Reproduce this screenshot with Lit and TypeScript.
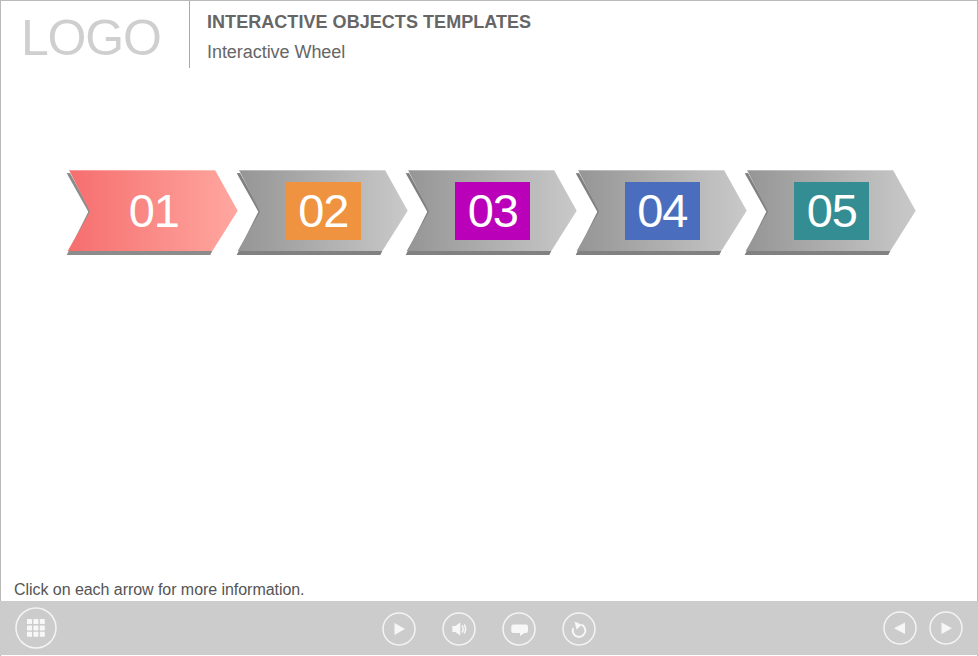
import { LitElement, html, css, svg } from "lit";
import { customElement } from "lit/decorators.js";

const ITEMS = [
  { n: "01", box: "", active: true },
  { n: "02", box: "#ef9340" },
  { n: "03", box: "#bb00b9" },
  { n: "04", box: "#4a6ebd" },
  { n: "05", box: "#338d92" },
];

const grid = [0, 1, 2].flatMap((y) =>
  [0, 1, 2].map((x) => svg`<rect x=${12 + x * 6.4} y=${12 + y * 6.4} width="5" height="5" rx=".6" fill="#f7f7f7"/>`)
);

@customElement("app-root")
export class AppRoot extends LitElement {
  static styles = css`
    :host {
      display: block;
      width: 978px;
      height: 656px;
      font-family: "Liberation Sans", Arial, sans-serif;
      background: #fff;
    }
    .page {
      box-sizing: border-box;
      width: 978px;
      height: 656px;
      border: 1px solid #b9b9b9;
      border-bottom: 0;
      display: flex;
      flex-direction: column;
    }
    header {
      display: flex;
      height: 67px;
      flex: none;
    }
    .logo {
      box-sizing: border-box;
      width: 189px;
      border-right: 1px solid #a9a9a9;
      padding: 5px 0 0 20px;
      font-size: 50px;
      line-height: 64px;
      color: #cfcfcf;
      letter-spacing: -1.2px;
    }
    .titles {
      padding: 12px 0 0 17px;
      color: #666;
    }
    .title {
      font-size: 18px;
      font-weight: 700;
      line-height: 18px;
      letter-spacing: 0.05px;
    }
    .sub {
      margin-top: 11px;
      font-size: 18px;
      line-height: 20px;
      letter-spacing: -0.05px;
    }
    .stage {
      flex: 1;
      display: flex;
      flex-direction: column;
      min-height: 0;
    }
    .arrows {
      display: grid;
      grid-template-columns: repeat(5, 169.5px);
      padding: 102px 0 0 64px;
    }
    .arrow {
      display: grid;
      width: 176px;
      height: 88px;
      cursor: pointer;
    }
    .arrow > * {
      grid-area: 1 / 1;
    }
    .arrow svg {
      display: block;
    }
    .label {
      justify-self: start;
      align-self: start;
      box-sizing: border-box;
      width: 75px;
      height: 58px;
      margin: 12px 0 0 51.3px;
      display: flex;
      align-items: center;
      justify-content: center;
      color: #fff;
      font-size: 47px;
      line-height: 58px;
      letter-spacing: -1px;
    }
    .hint {
      margin-top: auto;
      padding: 0 0 1px 13px;
      font-size: 16px;
      line-height: 20px;
      letter-spacing: -0.05px;
      color: #555;
    }
    footer {
      flex: none;
      height: 54px;
      margin: 0 -1px 1px;
      background: #cccccc;
      display: grid;
      grid-template-columns: 1fr auto 1fr;
      align-items: center;
      padding: 0 15px;
    }
    .group {
      display: flex;
      align-items: center;
    }
    .center {
      gap: 26px;
      margin: 2px 0 0 -1px;
    }
    .right {
      justify-self: end;
      gap: 12px;
    }
    .btn {
      display: block;
      padding: 0;
      border: 0;
      background: none;
      line-height: 0;
      cursor: pointer;
    }
  `;

  private arrow(i: number, active?: boolean) {
    const a = `a${i}`;
    return svg`<svg width="176" height="88" viewBox="0 0 176 88">
      <defs><linearGradient id=${a} x1="0" x2="1" y1="0" y2="0">
        <stop offset="0" stop-color=${active ? "#f56e6e" : "#959595"}/>
        <stop offset="1" stop-color=${active ? "#ffa79f" : "#c9c9c9"}/>
      </linearGradient></defs>
      <polygon points="1.7,3.3 5,3 26,41.700 4,81 147.300,81 145.300,85 1.700,85 23.300,41.700" fill=${active ? "#8c8c8c" : "#818181"}/>
      <polygon points="4,0 150,0 172.700,40.700 147.300,81 2.700,81 25,41.700" fill="url(#${a})"/>
      <polygon points="4,0 150,0 150.600,1 4.600,1" fill="#fff" opacity=".3"/>
    </svg>`;
  }

  private circle(size: number, body: unknown) {
    return html`<button class="btn"><svg width=${size} height=${size} viewBox="0 0 ${size} ${size}" fill="none">
      <circle cx=${size / 2} cy=${size / 2} r=${size / 2 - 1} stroke="#f4f4f4" stroke-width="1.500"/>
      ${body}
    </svg></button>`;
  }

  render() {
    return html`<div class="page">
      <header>
        <div class="logo">LOGO</div>
        <div class="titles">
          <div class="title">INTERACTIVE OBJECTS TEMPLATES</div>
          <div class="sub">Interactive Wheel</div>
        </div>
      </header>
      <main class="stage">
        <div class="arrows">
          ${ITEMS.map(
            (it, i) => html`<div class="arrow">
              ${this.arrow(i, it.active)}
              <div class="label" style=${it.box ? `background:${it.box}` : ""}>${it.n}</div>
            </div>`
          )}
        </div>
        <div class="hint">Click on each arrow for more information.</div>
      </main>
      <footer>
        <div class="group">${this.circle(42, grid)}</div>
        <div class="group center">
          ${this.circle(34, svg`<path d="M12.500 11v12l10.500-6z" fill="#f7f7f7"/>`)}
          ${this.circle(34, svg`<path d="M10.300 14h3l5-3.500v13l-5-3.500h-3z" fill="#f7f7f7"/><path d="M20.200 13.500c1.200 2.200 1.200 4.800 0 7M22.200 12.500c1.900 3 1.900 6 0 9" stroke="#f7f7f7" stroke-width="1.500"/>`)}
          ${this.circle(34, svg`<path d="M11.300 12.500h12.700a2 2 0 0 1 2 2v4.500a2 2 0 0 1-2 2h-1.500l-4.500 3v-3h-6.700a2 2 0 0 1-2-2v-4.500a2 2 0 0 1 2-2z" fill="#f7f7f7"/>`)}
          ${this.circle(34, svg`<path d="M11.200 16A6.300 6.300 0 1 0 19.500 12.700" stroke="#f7f7f7" stroke-width="1.900"/><path d="M12.500 9.500l7.500 3.200-5.500 4.800z" fill="#f7f7f7"/>`)}
        </div>
        <div class="group right">
          ${this.circle(34, svg`<path d="M22 11.500v11.500L11 17.200z" fill="#f7f7f7"/>`)}
          ${this.circle(34, svg`<path d="M12.500 11.500v11.500l10.500-5.800z" fill="#f7f7f7"/>`)}
        </div>
      </footer>
    </div>`;
  }
}
